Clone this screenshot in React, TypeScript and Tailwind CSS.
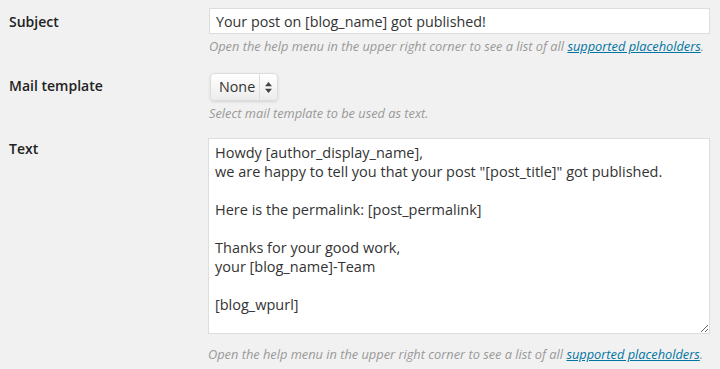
const font = { fontFamily: '"Open Sans", "Noto Sans", sans-serif' }

function Help({ children }: { children: React.ReactNode }) {
  return (
    <p className="mt-[5px] whitespace-nowrap text-[12.8px] italic leading-[15px] text-[#999]">{children}</p>
  )
}

function Placeholders() {
  return (
    <Help>
      Open the help menu in the upper right corner to see a list of all{' '}
      <a href="#" className="text-[#0074a2] underline">supported placeholders</a>.
    </Help>
  )
}

const body = `Howdy [author_display_name],
we are happy to tell you that your post "[post_title]" got published.

Here is the permalink: [post_permalink]

Thanks for your good work,
your [blog_name]-Team

[blog_wpurl]`

export default function App() {
  return (
    <div className="h-[369px] w-[720px] overflow-hidden bg-[#f1f1f1] text-[#222]" style={font}>
      <div className="grid grid-cols-[200px_1fr] pl-[9px] pr-[10px] pt-[8px]">
        <label className="pt-[3px] text-[14px] font-semibold">Subject</label>
        <div>
          <input
            defaultValue="Your post on [blog_name] got published!"
            className="h-[26px] w-full border border-[#ddd] bg-white px-[6px] text-[14.3px] text-[#333] outline-none"
            style={font}
          />
          <Placeholders />
        </div>

        <label className="mt-[19px] pt-[2px] text-[14px] font-semibold">Mail template</label>
        <div className="mt-[19px]">
          <div className="ml-[1px] flex h-[28px] w-[68px] items-center rounded-[4px] border border-[#ddd] bg-gradient-to-b from-white to-[#ececec] shadow-sm">
            <span className="flex-1 pl-[8px] text-[14.3px] text-[#333]">None</span>
            <span className="flex h-full w-[18px] items-center justify-center border-l border-[#ddd]">
              <svg width="7" height="11" viewBox="0 0 7 11" className="text-[#444]">
                <path d="M3.5 0 L7 4.2 L0 4.2 Z M0 6.8 L7 6.8 L3.5 11 Z" fill="currentColor" />
              </svg>
            </span>
          </div>
          <Help>Select mail template to be used as text.</Help>
        </div>

        <label className="mt-[17px] text-[14px] font-semibold">Text</label>
        <div className="mt-[17px]">
          <textarea
            defaultValue={body}
            className="-ml-[1px] block h-[196px] w-[502px] resize border border-[#ddd] bg-white px-[6px] py-[4px] text-[14.5px] leading-[19px] text-[#333] outline-none"
            style={font}
          />
          <p className="-ml-[1px] mt-[13px] whitespace-nowrap text-[12.8px] italic leading-[15px] text-[#999]">
            Open the help menu in the upper right corner to see a list of all{' '}
            <a href="#" className="text-[#0074a2] underline">supported placeholders</a>.
          </p>
        </div>
      </div>
    </div>
  )
}
